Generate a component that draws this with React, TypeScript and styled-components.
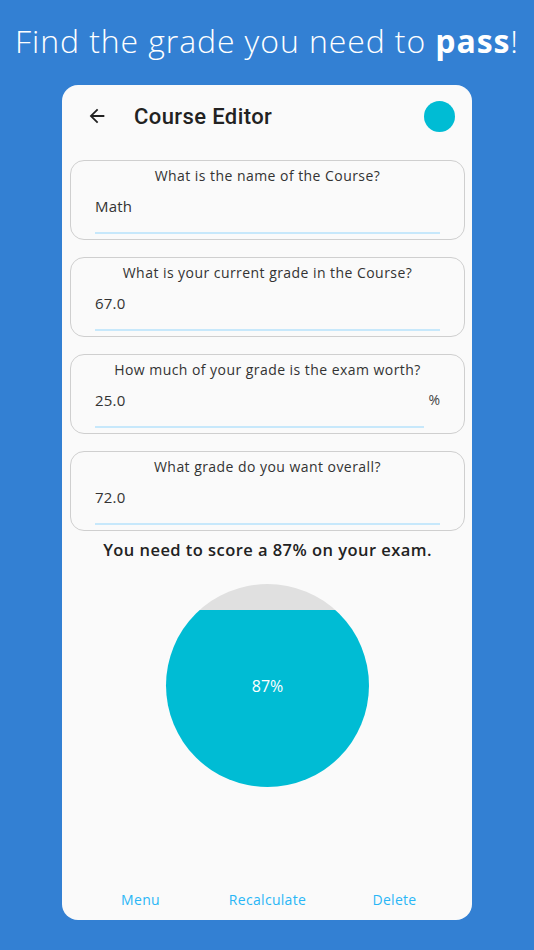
import React from 'react'
import styled, { createGlobalStyle } from 'styled-components'

const GlobalStyle = createGlobalStyle`
  html, body {
    margin: 0;
    padding: 0;
    background: #3380d3;
  }
  * {
    box-sizing: border-box;
  }
`

interface Field {
  label: string,
  value: string,
  suffix?: string,
}

const fields: Field[] = [
  { label: 'What is the name of the Course?', value: 'Math' },
  { label: 'What is your current grade in the Course?', value: '67.0' },
  { label: 'How much of your grade is the exam worth?', value: '25.0', suffix: '%' },
  { label: 'What grade do you want overall?', value: '72.0' },
]

const score = 87

const App: React.FC = () => {
  return (
    <Page>
      <GlobalStyle />
      <Headline>
        Find the grade you need to <strong>pass</strong>!
      </Headline>
      <Card>
        <TopBar>
          <BackButton aria-label="back">
            <svg width="22" height="22" viewBox="0 0 24 24">
              <path d="M20 11H7.83l5.59-5.59L12 4l-8 8 8 8 1.41-1.41L7.83 13H20v-2z" fill="#222" />
            </svg>
          </BackButton>
          <Title>Course Editor</Title>
          <Avatar />
        </TopBar>

        <Fields>
          {fields.map((f) => (
            <FieldBox key={f.label}>
              <FieldLabel>{f.label}</FieldLabel>
              <InputRow>
                <InputLine>
                  <InputValue>{f.value}</InputValue>
                </InputLine>
                {f.suffix && <Suffix>{f.suffix}</Suffix>}
              </InputRow>
            </FieldBox>
          ))}
        </Fields>

        <Result>You need to score a {score}% on your exam.</Result>

        <ChartWrap>
          <LiquidCircle $level={score}>
            <ChartLabel>{score}%</ChartLabel>
          </LiquidCircle>
        </ChartWrap>

        <Actions>
          <ActionButton>Menu</ActionButton>
          <ActionButton>Recalculate</ActionButton>
          <ActionButton>Delete</ActionButton>
        </Actions>
      </Card>
    </Page>
  )
}

const Page = styled.div`
  width: 534px;
  height: 950px;
  background: #3380d3;
  display: flex;
  flex-direction: column;
  align-items: center;
  font-family: 'Open Sans', 'Liberation Sans', sans-serif;
`

const Headline = styled.h1`
  margin: 19px 0 0;
  height: 66px;
  color: #ffffff;
  font-size: 32px;
  font-weight: 300;
  letter-spacing: 0.9px;
  white-space: nowrap;

  strong {
    font-weight: 700;
  }
`

const Card = styled.div`
  width: 410px;
  height: 835px;
  background: #fafafa;
  border-radius: 16px;
  display: flex;
  flex-direction: column;
  padding: 0 7px 0 8px;
`

const TopBar = styled.div`
  height: 62px;
  display: flex;
  align-items: center;
  padding: 0 10px 0 16px;
`

const BackButton = styled.div`
  width: 22px;
  height: 22px;
  display: flex;
  align-items: center;
  justify-content: center;
`

const Title = styled.div`
  flex: 1;
  margin-left: 26px;
  font-family: Roboto, 'Liberation Sans', sans-serif;
  font-size: 22px;
  font-weight: 500;
  letter-spacing: 0.4px;
  color: #222222;
`

const Avatar = styled.div`
  width: 31px;
  height: 31px;
  border-radius: 50%;
  background: #00bcd4;
`

const Fields = styled.div`
  margin-top: 13px;
  display: flex;
  flex-direction: column;
  gap: 17px;
`

const FieldBox = styled.div`
  height: 80px;
  border: 1px solid #cfcfcf;
  border-radius: 14px;
  padding: 6px 24px 0;
  display: flex;
  flex-direction: column;
`

const FieldLabel = styled.div`
  text-align: center;
  font-size: 14px;
  letter-spacing: 0.45px;
  color: #333333;
  line-height: 18px;
`

const InputRow = styled.div`
  display: flex;
  align-items: flex-start;
  margin-top: 11px;
`

const InputLine = styled.div`
  flex: 1;
  height: 38px;
  border-bottom: 2px solid #c7e8fb;
`

const InputValue = styled.div`
  font-size: 15px;
  letter-spacing: 0.2px;
  color: #333333;
  line-height: 20px;
`

const Suffix = styled.div`
  margin-left: 4px;
  font-size: 14px;
  color: #444444;
  line-height: 20px;
`

const Result = styled.div`
  margin-top: 8px;
  text-align: center;
  font-size: 16.5px;
  font-weight: 600;
  letter-spacing: 0.45px;
  color: #222222;
  line-height: 22px;
`

const ChartWrap = styled.div`
  display: flex;
  justify-content: center;
  margin-top: 23px;
`

const LiquidCircle = styled.div<{ $level: number }>`
  width: 203px;
  height: 203px;
  border-radius: 50%;
  background: linear-gradient(
    to bottom,
    #e0e0e0 ${(p) => 100 - p.$level}%,
    #00bcd4 ${(p) => 100 - p.$level}%
  );
  display: flex;
  align-items: center;
  justify-content: center;
`

const ChartLabel = styled.span`
  color: #ffffff;
  font-size: 16px;
`

const Actions = styled.div`
  margin-top: auto;
  margin-bottom: 12px;
  display: grid;
  grid-template-columns: repeat(3, 127px);
  justify-content: center;
`

const ActionButton = styled.button`
  border: none;
  background: transparent;
  font-family: 'Open Sans', 'Liberation Sans', sans-serif;
  font-size: 14px;
  letter-spacing: 0.3px;
  color: #29b6f6;
  height: 18px;
  padding: 0;
  text-align: center;
  cursor: pointer;
`

export default App
